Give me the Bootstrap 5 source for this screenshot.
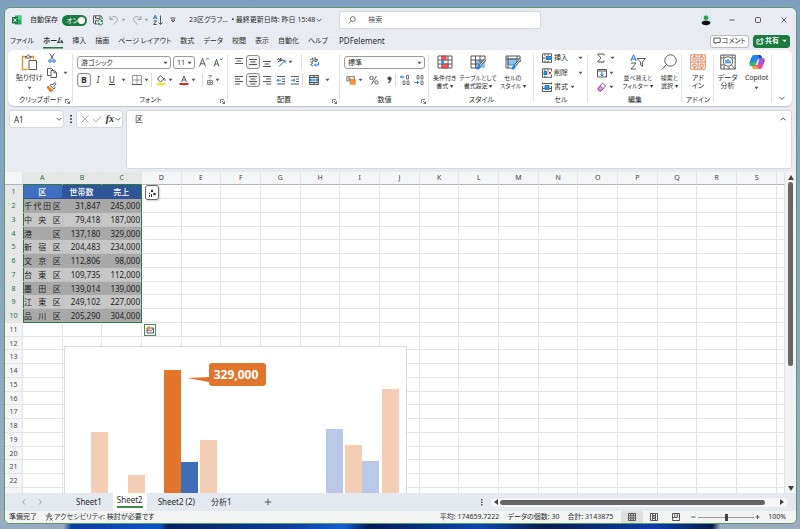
<!DOCTYPE html>
<html lang="ja">
<head>
<meta charset="utf-8">
<meta name="viewport" content="width=device-width, initial-scale=1">
<title>23区グラフ - Excel</title>
<link href="https://cdn.jsdelivr.net/npm/bootstrap@5.3.0/dist/css/bootstrap.min.css" rel="stylesheet">
<style>
:root{--ink:#2b2b2b;--green:#1b7a3e;--line:#d4d7db}
body{height:100vh;padding:7px 3px 5px 4px;overflow:hidden;color:var(--ink);
 font-family:"Noto Sans","Noto Sans CJK JP",sans-serif;font-size:7px;line-height:8px;font-feature-settings:"palt";
 background:linear-gradient(100deg,#96abbd 0 8%,#0b3f9c 9%,#0c55c4 20%,#06225f 21%,#0a3f9a 36%,#1560cf 43%,#041c55 46%,#0b48ad 60%,#0a1d4d 68%,#0b3fa8 82%,#071c4a 89%,#9aadbf 90%) bottom/100% 6px no-repeat,
 linear-gradient(#7f9fbf,#86a5bf 40%,#9aadbf)}
button,input,select,textarea{font:inherit;color:inherit;border:0;background:none;padding:0;margin:0}
button{display:inline-flex;align-items:center;justify-content:center;white-space:nowrap}
svg{display:block;flex:none;overflow:visible;fill:none;stroke:#575757;stroke-width:1}
a{color:inherit;text-decoration:none}
.gap-s{margin-left:2px}.gap-r{margin-right:1px}.gap-m{margin-left:6px}
.win{height:100%;border:1px solid #5d9967;border-radius:6px;background:#e8ecf2;overflow:hidden}
.titlebar{height:24px;padding:0 4px 0 7px}
.i5{width:5px;height:4px}.i8{width:8px;height:8px}.i10{width:10px;height:10px}.i12{width:12px;height:12px}.i16{width:16px;height:16px}
.autosave{width:25px;height:11px;border-radius:6px;background:var(--green);color:#fff;position:relative;padding-left:4px;line-height:11px;cursor:pointer}
.autosave input{appearance:none;position:absolute;right:2px;top:2px;width:7px;height:7px;border-radius:50%;background:#fff}
.finder{height:18px;border:1px solid #d3d6da;border-radius:3px;background:#fff;padding-left:8px;color:#555;flex:0 0 202px}
.finder input{outline:0}
.finder input::placeholder{color:#555;opacity:1}
.menubar{height:18px;padding:0 6px 0 5px}
.menubar a{line-height:14px;white-space:nowrap;margin-right:9px}
.menubar .current{font-weight:700;border-bottom:1px solid var(--green);box-shadow:0 1px #7aae88;line-height:12px}
.latin{font-size:8px}
.pill{height:13px;border:1px solid #bbb;border-radius:3px;background:#fff;padding:0 2px;gap:1px}
.pill.share{background:var(--green);border-color:var(--green);color:#fff}
.ribbon{height:56px;margin:0 4px 0 3px;background:#fff;border-radius:6px;box-shadow:0 1px 1px #bfc4ca;display:grid;
 grid-template-columns:65px 155px 112px 89px 105px 54px 94px 32px 58px 1fr}
.panel{position:relative;display:flex;flex-direction:column;min-width:0;padding-top:3px}
.panel:not(:last-child)::after{content:"";position:absolute;right:0;top:4px;bottom:4px;width:1px;background:#e2e2e2}
.panel .tools{height:43px}
.caption-row{height:9px;text-align:center;position:relative}
.caption-row button{position:absolute;right:3px;top:3px}
.big{flex-direction:column;justify-content:flex-start;white-space:nowrap}
.big span{line-height:8px;text-align:center}
.big .i16{margin:1px 0 4px}
.tight .big span{font-size:6px}
.trow{height:18px;display:flex;align-items:center}
.combo{appearance:none;height:13px;border:1px solid #9a9a9a;border-radius:3px;padding:0 3px;background:#fff;line-height:11px}
.combo-wrap{position:relative}
.combo-wrap svg{position:absolute;right:3px;top:5px;pointer-events:none}
.font-name{width:94px}.font-size{width:22px}.num-format{width:81px}
.on{width:14px;height:14px;border:1px solid #8d8d8d;border-radius:3px;background:#f2f2f2}
.rule{width:1px;height:14px;background:#ddd}
.slot{width:14px}
.formula{height:66px;padding:4px 4px 3px 4px;gap:3px}
.fbox{background:#fff;border:1px solid var(--line);border-radius:3px}
.fbox.short{height:18px}
.namebox{width:55px}.fxbox{width:47px}
.formula textarea{resize:none}
.fnx{font-family:"Liberation Serif",serif;font-weight:700;font-size:10px}
.sheet-area{position:relative;overflow:hidden;background:#fff;min-height:0}
.cells{width:100%;table-layout:fixed;border-collapse:separate;border-spacing:0;font-size:8px;line-height:12px}
.cells th,.cells td{padding:0;height:14px;font-weight:400;white-space:nowrap;border-right:1px solid #e3e3e3;border-bottom:1px solid #e3e3e3}
.cells tr:nth-child(4n) > *{height:13px;line-height:11px}
.cells th{background:#f4f5f6;text-align:center;font-size:7px;color:#444}
.cells thead th{height:13px;line-height:10px;border-bottom-color:#b5b5b5}
.cells .picked{background:#e5e7e7;color:#26713c}
.cells thead .picked{border-bottom-color:#2f7a44}
.cells .sel{text-align:right;padding-right:1px;background:#c7c7c7;border-color:#c0c0c0;color:#222}
.cells tr:nth-child(even) .sel{background:#a8a8a8;border-color:#aaa}
.cells .sel.ward{text-align:left;text-align-last:justify;padding:0 1px;font-feature-settings:normal}
.cells tr:first-child .sel{background:#2f5597;border-color:#2f5597;color:#fff;text-align:center;text-align-last:center;font-weight:500}
.cells tr:first-child .sel.ward{background:#3f6fc2}
.cells .sel.ward{box-shadow:inset 1px 0 #2f7a44}
.cells .sel.edge{border-right-color:#2f7a44!important}
.cells tr:nth-child(10) .sel{border-bottom-color:#2f7a44}
.spot{position:relative}
.spot button{position:absolute;background:#fff;z-index:2}
.spark{left:3px;top:0;width:14px;height:15px;border:1px solid #666!important;border-radius:3px;box-shadow:1px 1px 2px #ccc}
.quick{left:2px;top:1px;width:12px;height:12px;border:1px solid #56855d!important}
.c-head{width:18px}.c-last{width:8px}
.plot{position:absolute;left:59px;top:174px;z-index:1}
.vscroll{flex:0 0 11px;background:#f1f2f4;padding:3px 0 1px}
.vscroll i{width:5px;border-radius:3px;background:#666;height:184px;margin-top:2px}
.tabs{height:18px;padding-left:15px;background:#e4e8ef}
.tabs a{line-height:18px;font-size:8px;padding:0 8px;height:18px;white-space:nowrap}
.tabs .current{background:#fff;border-radius:0 0 4px 4px;padding:0 4px;margin:0 3px}
.tabs .current span{display:block;line-height:13px;border-bottom:2px solid #3c8a4c}
.hscroll{width:297px;height:9px;border-radius:5px;background:#f7f7f8;padding:0 4px 0 3px;gap:2px}
.hscroll i{height:5px;border-radius:3px;background:#666;flex:0 0 265px}
.status{height:12px;background:#f2f4f3;padding:0 10px 0 4px;white-space:nowrap}
.status .viewbtn{width:22px;height:12px}
.status .viewbtn.active{background:#dedede}
.zoomer{appearance:none;width:56px;height:8px;background:linear-gradient(#999,#999) center/100% 1px no-repeat}
.zoomer::-webkit-slider-thumb{appearance:none;width:3px;height:7px;background:#444}
</style>
<script src="https://cdn.jsdelivr.net/npm/bootstrap@5.3.0/dist/js/bootstrap.bundle.min.js"></script>
</head>
<body>
<svg class="d-none" aria-hidden="true">
 <symbol id="caret" viewBox="0 0 5 4"><path d="M.5.8h4L2.5 3.2z" fill="#555" stroke="none"/></symbol>
 <symbol id="chev" viewBox="0 0 8 8"><path d="M1.5 2.8 4 5.3l2.500-2.500"/></symbol>
 <symbol id="launch" viewBox="0 0 5 5"><path d="M.5 4V.5H4M2 2l2.500 2.500M4.600 2.200v2.400H2.200" stroke-width=".8"/></symbol>
 <symbol id="al" viewBox="0 0 10 10"><path d="M1 1.500h8M1 4h5M1 6.500h8M1 9h5"/></symbol>
 <symbol id="ac" viewBox="0 0 10 10"><path d="M1 1.500h8M2.500 4h5M1 6.500h8M2.500 9h5"/></symbol>
 <symbol id="ar" viewBox="0 0 10 10"><path d="M1 1.500h8M4 4h5M1 6.500h8M4 9h5"/></symbol>
 <symbol id="at" viewBox="0 0 10 10"><path d="M1 1.500h8M2.500 4h5M1 6.500h8"/></symbol>
 <symbol id="am" viewBox="0 0 10 10"><path d="M1 2.500h8M2.500 5h5M1 7.500h8"/></symbol>
 <symbol id="ab" viewBox="0 0 10 10"><path d="M1 4.500h8M2.500 7h5M1 9.500h8"/></symbol>
 <symbol id="lens" viewBox="0 0 10 10"><circle cx="6" cy="3.800" r="3"/><path d="M3.800 6 .8 9.200"/></symbol>
</svg>

<div class="win d-flex flex-column">
 <header class="titlebar d-flex align-items-center flex-shrink-0">
  <svg class="i10" viewBox="0 0 10 10"><path d="M3 .5h6.500v9H3z" fill="#23a566" stroke="none"/><path d="M6 .5h3.500v4.500H6z" fill="#53ce8a" stroke="none"/><path d="M0 2h6v6.500H0z" fill="#107c41" stroke="none"/><path d="m1.500 3.500 3 3.500M4.500 3.500l-3 3.500" stroke="#fff"/></svg>
  <span class="text-nowrap ms-2">自動保存</span>
  <label class="autosave ms-1">オン<input type="checkbox" role="switch" checked aria-label="自動保存"></label>
  <button class="gap-m" aria-label="保存"><svg class="i10" viewBox="0 0 10 10"><path d="M4 9H1.500L.5 8V.8h7.300L9.200 2v2M2.500 1v2.500h4.500V1M2.500 9V5.500h2"/><path d="M5 7a2 2 0 0 1 4-.8M9.500 7.500a2 2 0 0 1-4 1M9.200 4.700v1.700H7.500M5.200 10V8.300H7" stroke="#1f8a4c"/></svg></button>
  <button class="gap-m" aria-label="元に戻す"><svg class="i10" viewBox="0 0 10 10" style="stroke:#9aa0a6"><path d="M1 1v3.500h3.500M1.200 4.300C3 1.500 6 .8 7.700 2.500 9.400 4.300 8.500 6 4.500 9.500"/></svg><svg class="i5 gap-s"><use href="#caret" opacity=".5"/></svg></button>
  <button class="gap-m" aria-label="やり直し"><svg class="i10" viewBox="0 0 10 10" style="stroke:#9aa0a6"><path d="M9 1v3.500H5.500M8.800 4.300C7 1.500 4 .8 2.300 2.500.6 4.300 1.500 6 5.500 9.500"/></svg><svg class="i5 gap-s"><use href="#caret" opacity=".5"/></svg></button>
  <button class="ms-1" aria-label="昇順"><svg class="i10" viewBox="0 0 10 10"><path d="M.5 4 2.200.2 4 4M1 3h2.500" stroke="#1976d2"/><path d="M.6 5.800h3L.6 9.500h3.200M7.500.5v9M5.500 7.500l2 2 2-2"/></svg></button>
  <button class="gap-m" aria-label="ツールバーのカスタマイズ"><svg class="i8" viewBox="0 0 8 8"><path d="M1.500 2h5M2 4h4L4 6z"/></svg></button>
  <button class="ms-2 ps-1 text-nowrap">23区グラフ…&nbsp; • 最終更新日時: 昨日 15:48<svg class="i8"><use href="#chev"/></svg></button>
  <label class="finder d-flex align-items-center ms-3" aria-label="検索"><svg class="i8 me-2"><use href="#lens" width="8" height="8"/></svg><input class="ms-1 w-75" type="search" placeholder="検索"></label>
  <div class="ms-auto d-flex align-items-center gap-3">
   <svg class="i12" viewBox="0 0 12 12" style="stroke:none"><circle cx="6" cy="6" r="6" fill="#d7e6ee"/><circle cx="6" cy="3.800" r="2.300" fill="#269b51"/><path d="M1.500 9c0-3.500 9-3.500 9 0-2 3-7 3-9 0z" fill="#111"/></svg>
   <button aria-label="最小化"><svg class="i8" viewBox="0 0 8 8"><path d="M1.500 4h5"/></svg></button>
   <button class="gap-s" aria-label="最大化"><svg class="i8" viewBox="0 0 8 8"><rect x="1.500" y="1.500" width="5" height="5" rx="1"/></svg></button>
   <button class="gap-s me-1" aria-label="閉じる"><svg class="i8" viewBox="0 0 8 8"><path d="m1.500 1.500 5 5m0-5-5 5"/></svg></button>
  </div>
 </header>

 <nav class="menubar d-flex align-items-center flex-shrink-0">
  <a href="#">ファイル</a><a href="#" class="current">ホーム</a><a href="#">挿入</a><a href="#">描画</a><a href="#">ページ レイアウト</a><a href="#">数式</a><a href="#">データ</a><a href="#">校閲</a><a href="#">表示</a><a href="#">自動化</a><a href="#">ヘルプ</a><a href="#" class="latin gap-s">PDFelement</a>
  <button class="pill ms-auto"><svg class="i8" viewBox="0 0 8 8"><path d="M.8 1h6.400v4.500H4L2.200 7V5.500H.8z"/></svg>コメント</button>
  <button class="pill share ms-1"><svg class="i8" viewBox="0 0 8 8" style="stroke:#fff"><path d="M3 2.500H1V7h5.500V5M2.500 5C3 3 4 2.500 5.500 2.500V1L7.500 3 5.500 4.800V3.500"/></svg><b>共有</b><svg class="i5 gap-s" viewBox="0 0 5 4"><path d="M.5.8h4L2.500 3.200z" style="fill:#fff;stroke:none"/></svg></button>
 </nav>

 <section class="ribbon flex-shrink-0">
  <div class="panel">
   <div class="tools d-flex ps-2">
    <button class="big me-1"><svg class="i16" viewBox="0 0 16 16"><path d="M5 2.500H1.500v13H7M10 2.500h2.500v3" stroke="#e39a3f" stroke-width="1.500"/><path d="M4.500 4V2.500H6C6 .3 8.500.3 8.500 2.500H10V4zM8 6.500h7.500v9H8z" fill="#fff"/></svg><span>貼り付け</span><svg class="i5 mt-1"><use href="#caret"/></svg></button>
    <div class="d-flex flex-column justify-content-between pb-1">
     <button class="align-self-start" aria-label="切り取り"><svg class="i10" viewBox="0 0 10 10"><path d="m2.800.5 3.500 6M7.200.5l-3.500 6"/><circle cx="3" cy="8" r="1.300" stroke="#1976d2"/><circle cx="7" cy="8" r="1.300" stroke="#1976d2"/></svg></button>
     <button aria-label="コピー"><svg class="i10" viewBox="0 0 10 10"><path d="M3.500 7.500h-3v-7h4L6 2M4 2.500h3.500l2 2v5H4zM7 2.800v2h2"/></svg><svg class="i5 gap-m"><use href="#caret"/></svg></button>
     <button class="align-self-start" aria-label="書式のコピー"><svg class="i10" viewBox="0 0 10 10"><path d="m1 4 5 4.500L3.500 9.700.5 6z" fill="#f08a24" stroke="#d97313"/><path d="m3 3.500 4 3.500 1-1.500-1-1 2-3L7.500.8 5.500 3 4.500 2z" fill="#fff"/></svg></button>
    </div>
   </div>
   <div class="caption-row">クリップボード<button aria-label="クリップボードの設定"><svg width="5" height="5"><use href="#launch"/></svg></button></div>
  </div>

  <div class="panel">
   <div class="tools ps-1">
    <div class="trow">
     <span class="combo-wrap"><select class="combo font-name" aria-label="フォント"><option>游ゴシック</option></select><svg class="i5"><use href="#caret"/></svg></span>
     <span class="combo-wrap gap-s"><select class="combo font-size" aria-label="サイズ"><option>11</option></select><svg class="i5"><use href="#caret"/></svg></span>
     <button class="ms-1" aria-label="拡大"><svg class="i10" viewBox="0 0 10 10"><path d="m.5 9.500 3-8 3 8M1.500 6.800h4"/><path d="M7.500 2.500 8.700 1l1.300 1.500" stroke="#1976d2"/></svg></button>
     <button class="ms-1" aria-label="縮小"><svg class="i10" viewBox="0 0 10 10"><path d="m1 9.500 2.500-7 2.500 7M2 7h3.200"/><path d="M7 1.500 8.200 3l1.300-1.500" stroke="#1976d2"/></svg></button>
    </div>
    <div class="trow">
     <button class="on latin fw-bold">B</button>
     <button class="slot latin fst-italic">I</button>
     <button class="slot latin text-decoration-underline">U</button>
     <svg class="i5 gap-s"><use href="#caret"/></svg>
     <button class="gap-m" aria-label="罫線"><svg class="i10" viewBox="0 0 10 10"><path d="M.5.5h9v9h-9zM5 .5v9M.5 5h9" stroke="#999"/><path d="M0 9.500h10"/></svg></button>
     <svg class="i5 gap-s"><use href="#caret"/></svg><i class="rule gap-s"></i>
     <button class="ms-1" aria-label="塗りつぶし"><svg class="i10" viewBox="0 0 10 10"><path d="m4.500.5 3.500 3.500-3.500 3-3-3z"/><path d="M8 3q1.500 1.500 1 3" stroke="#1976d2"/><path d="M.5 9h9" stroke="#f2e51c" stroke-width="2"/></svg></button>
     <svg class="i5 gap-s"><use href="#caret"/></svg>
     <button class="gap-m" aria-label="文字色"><svg class="i10" viewBox="0 0 10 10"><path d="m2.500 7 2.500-6 2.500 6M3.500 5h3"/><path d="M.5 9h9" stroke="#e1241b" stroke-width="2"/></svg></button>
     <svg class="i5 gap-s"><use href="#caret"/></svg><i class="rule gap-m"></i>
     <button class="gap-s" aria-label="ふりがな"><svg class="i10" viewBox="0 0 10 10" style="stroke:#888"><path d="M3.500.5h3l-2 3M2.500 5.500h5v4h-5zM5 4.500v5M2.500 7.500h5"/></svg></button>
     <svg class="i5"><use href="#caret"/></svg>
    </div>
   </div>
   <div class="caption-row">フォント<button aria-label="フォントの設定"><svg width="5" height="5"><use href="#launch"/></svg></button></div>
  </div>

  <div class="panel">
   <div class="tools ps-1">
    <div class="trow">
     <button class="slot" aria-label="上揃え"><svg class="i10"><use href="#at"/></svg></button>
     <button class="on" aria-label="上下中央"><svg class="i10"><use href="#am"/></svg></button>
     <button class="slot" aria-label="下揃え"><svg class="i10"><use href="#ab"/></svg></button>
     <button class="slot" aria-label="方向"><svg class="i10" viewBox="0 0 10 10"><path d="m1 3 2-1.500 1 3M1.500 5l2-1M4.500 1v3l2-1z"/><path d="m3 9.500 6-6M6.500 3.500H9V6" stroke="#1976d2"/></svg></button>
     <svg class="i5"><use href="#caret"/></svg><i class="rule ms-2 gap-r"></i>
     <button class="gap-m" aria-label="折り返し"><svg class="i10" viewBox="0 0 10 10"><path d="m1 3 3-2v4H1.500M6 0v5l3-2-3-1M4 6l-2.500 1.500L4 9"/><path d="M9.500 5v3h-4M7 6.500 5.500 8 7 9.500" stroke="#1976d2"/></svg></button>
    </div>
    <div class="trow">
     <button class="slot" aria-label="左揃え"><svg class="i10"><use href="#al"/></svg></button>
     <button class="on" aria-label="中央揃え"><svg class="i10"><use href="#ac"/></svg></button>
     <button class="slot" aria-label="右揃え"><svg class="i10"><use href="#ar"/></svg></button>
     <button class="slot" aria-label="インデントを減らす"><svg class="i10" viewBox="0 0 10 10"><path d="M1 1.500h8M6 4h3M6 6.500h3M1 9h8"/><path d="M5 5.200H1m1.500-1.500L1 5.200l1.500 1.500" stroke="#1976d2"/></svg></button>
     <button class="slot" aria-label="インデントを増やす"><svg class="i10" viewBox="0 0 10 10"><path d="M1 1.500h8M6 4h3M6 6.500h3M1 9h8"/><path d="M1 5.200h4M3.500 3.700 5 5.200 3.500 6.700" stroke="#1976d2"/></svg></button>
     <i class="rule"></i>
     <button class="gap-m" aria-label="結合"><svg class="i10" viewBox="0 0 10 10"><path d="M.5.5h9v9h-9z" fill="#cfe5f7"/><path d="M5 .5v2M5 7.500v2M.5 2.500h9M.5 7.500h9"/><path d="M1 5h8M2.500 3.800 1 5l1.500 1.200M7.500 3.800 9 5 7.500 6.200" stroke="#1976d2"/></svg></button>
     <svg class="i5 gap-m"><use href="#caret"/></svg>
    </div>
   </div>
   <div class="caption-row">配置<button aria-label="配置の設定"><svg width="5" height="5"><use href="#launch"/></svg></button></div>
  </div>

  <div class="panel">
   <div class="tools ps-1">
    <div class="trow"><span class="combo-wrap"><select class="combo num-format" aria-label="表示形式"><option>標準</option></select><svg class="i5"><use href="#caret"/></svg></span></div>
    <div class="trow">
     <button class="gap-s" aria-label="通貨"><svg class="i10" viewBox="0 0 12 10"><path d="M1 1h9v5H1z"/><path d="M5 4.500h6V10H5z" fill="#f39a3c" stroke="#e27d16"/><circle cx="4" cy="3.500" r="1"/></svg></button>
     <svg class="i5 gap-s"><use href="#caret"/></svg>
     <button class="gap-m" aria-label="パーセント"><svg class="i10" viewBox="0 0 10 10"><circle cx="2.500" cy="3" r="1.700"/><circle cx="7.500" cy="7.500" r="1.700"/><path d="m7.500 1-5 8.500"/></svg></button>
     <button class="gap-m" aria-label="桁区切り"><svg class="i8" viewBox="0 0 8 8"><circle cx="4.500" cy="2.500" r="1.600" style="fill:#333"/><path d="M5.800 2.500Q6 5.500 3 7" stroke-width="1.300"/></svg></button>
     <i class="rule gap-s me-1"></i>
     <button aria-label="小数点以下を増やす"><svg class="i10" viewBox="0 0 10 10"><path d="M4.500 2H.5M2 .5.5 2 2 3.500" stroke="#1976d2"/><path d="M6.500.5h2v3.500h-2zM3 6h2v3.500H3zM7 6h2v3.500H7z" stroke-width=".8"/></svg></button>
     <button class="ms-1" aria-label="小数点以下を減らす"><svg class="i10" viewBox="0 0 10 10"><path d="M.5 7.500h4M3 6l1.500 1.500L3 9" stroke="#1976d2"/><path d="M7 6h2v3.500H7zM3 .5h2V4H3zM7 .5h2V4H7z" stroke-width=".8"/></svg></button>
    </div>
   </div>
   <div class="caption-row">数値<button aria-label="数値の設定"><svg width="5" height="5"><use href="#launch"/></svg></button></div>
  </div>

  <div class="panel">
   <div class="tools tight d-flex justify-content-between ps-1 pe-2">
    <button class="big"><svg class="i16" viewBox="0 0 16 16"><path d="M1 2h14v12H1zM1 6h14M1 10h14M5 2v12M11 2v12"/><path d="M5 2h4v4H5zM5 10h6v4H5z" fill="#f0595c" stroke="#d63b40"/><path d="M4 6h3v4H4z" fill="#3f8fd8" stroke="none"/></svg><span>条件付き<br>書式 ▾</span></button>
    <button class="big"><svg class="i16" viewBox="0 0 16 16"><path d="M6 6h9v8H6z" fill="#8cc4ef" stroke="none"/><path d="M15 8V2H1v12h6M1 6h14M1 10h8M5.500 2v12M10 2v7"/><path d="m15.500 5-6 7" stroke="#555" stroke-width="2.500"/><path d="m15.500 5-6 7" stroke="#fff"/><path d="M9.500 11c-2 0-2 3-4 4 3 1 5.500 0 5-3z" fill="#2283d8" stroke="none"/></svg><span>テーブルとして<br>書式設定 ▾</span></button>
    <button class="big"><svg class="i16" viewBox="0 0 16 16"><path d="M3 5h9v6H3z" fill="#8cc4ef" stroke="#3b8ad0"/><path d="M15 8V2H1v12h5M1 5h14M3 2v12M12 2v3"/><path d="m15.500 5-6 7" stroke="#555" stroke-width="2.500"/><path d="m15.500 5-6 7" stroke="#fff"/><path d="M9.500 11c-2 0-2 3-4 4 3 1 5.500 0 5-3z" fill="#2283d8" stroke="none"/></svg><span>セルの<br>スタイル ▾</span></button>
   </div>
   <div class="caption-row">スタイル</div>
  </div>

  <div class="panel">
   <div class="tools d-flex flex-column justify-content-between align-items-start ps-2 pb-1">
    <button><svg class="i10" viewBox="0 0 10 10"><path d="M3 .8H.5v8.500H3M3 .8h6.500v2.500M3 9.300h6.500V7M3 .8v2M6 .8v2M3 7.500v2M6 7.500v2"/><path d="M4 3.500h5.500v3H4z" fill="#3c91db" stroke="#2476bf"/><path d="M0 5h3"/></svg><span class="gap-s me-1">挿入</span><svg class="i5 gap-m"><use href="#caret"/></svg></button>
    <button><svg class="i10" viewBox="0 0 10 10"><path d="M3 .8H.5v8.500h9V7M3 .8h6.500v2M3 .8v2M6 .8v2M3 7.500v2"/><path d="M2 3.500h3v3H2z" fill="#3c91db" stroke="#2476bf"/><path d="m6.500 3.500 3 3m0-3-3 3" stroke="#e0322f"/></svg><span class="gap-s me-1">削除</span><svg class="i5 gap-m"><use href="#caret"/></svg></button>
    <button><svg class="i10" viewBox="0 0 10 10"><path d="M.5 1.500h9M.5.5v2M9.500.5v2M.5 4v5.500h9V4M.5 6.500h9"/><path d="M3 3.500h4v4H3z" fill="#3c91db" stroke="#2476bf"/></svg><span class="gap-s">書式</span><svg class="i5 gap-s"><use href="#caret"/></svg></button>
   </div>
   <div class="caption-row">セル</div>
  </div>

  <div class="panel">
   <div class="tools tight d-flex ps-2">
    <div class="d-flex flex-column justify-content-between pb-1">
     <button aria-label="合計"><svg class="i10" viewBox="0 0 10 10"><path d="M8 2.500V1H1.500L5 5 1.500 9H8V7.500"/></svg><svg class="i5 ms-1"><use href="#caret"/></svg></button>
     <button aria-label="フィル"><svg class="i10" viewBox="0 0 10 10"><path d="M.5 1.500h9v7.500h-9zM.5 3h9"/><path d="M5 4v4M3.500 6.500 5 8l1.500-1.500" stroke="#1976d2"/></svg><svg class="i5 gap-s"><use href="#caret"/></svg></button>
     <button aria-label="クリア"><svg class="i10" viewBox="0 0 10 10" style="stroke:#a340b5"><path d="m5.500 1 3 3-4.500 5H2.500L.8 6.800z"/><path d="m.8 6.800 2.500-3 3 3L4 9H2.500z" fill="#d69ae0"/></svg><svg class="i5 gap-s"><use href="#caret"/></svg></button>
    </div>
    <button class="big flex-fill"><svg class="i16" viewBox="0 0 16 16"><path d="M.8 7 3.500.8 6.200 7M1.800 5h3.500" stroke="#1976d2"/><path d="M1 9h5l-5 6h5.200M7 4.500h8.500L12.500 8v4.500l-2-1.500V8z"/></svg><span>並べ替えと<br>フィルター ▾</span></button>
    <button class="big pe-1"><svg class="i16" viewBox="0 0 16 16"><circle cx="9.500" cy="6.500" r="5.700"/><path d="M5.500 10.500.8 15.500"/></svg><span>検索と<br>選択 ▾</span></button>
   </div>
   <div class="caption-row">編集</div>
  </div>

  <div class="panel">
   <div class="tools d-flex justify-content-center"><button class="big"><svg class="i16" viewBox="0 0 16 16" style="stroke:#dc8052"><path d="M.8.8h14.400v14.400H.8zM8 .8v14.400M.8 8h14.400"/><path d="M3 3h3v3H3zM10 3h3v3h-3zM3 10h3v3H3zM10 10h3v3h-3zM4.500 3V1M11.500 3V1M4.500 13v2M11.500 13v2"/></svg><span>アド<br>イン</span></button></div>
   <div class="caption-row">アドイン</div>
  </div>

  <div class="panel">
   <div class="tools d-flex justify-content-around">
    <button class="big"><svg class="i16" viewBox="0 0 16 16"><path d="M.8 1h14.400v14H.8zM.8 4h3M12 4h3M.8 11h4M4 1v3M12 1v3M4 12v3M9 13v2"/><circle cx="8" cy="7.500" r="4.700" fill="#fff"/><path d="m11.500 11 3.500 4"/><path d="M6 6v3.500M8 5v4.500M10 6.500v3" stroke="#1976d2" stroke-width="1.300"/></svg><span>データ<br>分析</span></button>
    <button class="big"><svg class="i16" viewBox="0 0 16 16" style="stroke:none"><path d="M5 1h5.500q1.500 0 2 1.500L13 4h-2Q9.500 4 9 5.500L7 12H2.500Q0 12 .5 8.500L2.500 3Q3.200 1 5 1z" fill="#2087e8"/><path d="M.8 8 2 12h4.500L8 8z" fill="#35b96b"/><path d="M9 1h1.500q1.500 0 2 1.500L13 4h-2.500Z" fill="#1747b5"/><path d="M11 15H5.500Q4 15 3.500 13.500L3 12h2q1.500 0 2-1.500L9 4h4.500q2.500 0 2 3.500L13.500 13q-.7 2-2.500 2z" fill="#e8518d"/><path d="M9 4h4.500q2.500 0 2 3.500l-.8 2.500H7z" fill="#9a5be0"/><path d="M3 12h4l3 3H5.500Q4 15 3.500 13.500z" fill="#f5a530"/><path d="m8.800 5.500 1.500 0-2 5.500H6.800z" fill="#fff"/></svg><span>Copilot</span><svg class="i5 mt-1"><use href="#caret"/></svg></button>
   </div>
  </div>
  <div class="panel justify-content-end align-items-center pb-1"><button aria-label="リボンを折りたたむ"><svg class="i8"><use href="#chev"/></svg></button></div>
 </section>

 <section class="formula d-flex flex-shrink-0">
  <label class="fbox short namebox d-flex align-items-center gap-1 ps-1" aria-label="名前ボックス"><input class="latin flex-fill w-50" value="A1"><svg class="i8"><use href="#chev"/></svg></label>
  <svg class="mt-1 gap-s" width="4" height="10" viewBox="1 0 4 10" style="stroke:none;fill:#444"><path d="M2 1h2v1.500H2zM2 4.300h2v1.500H2zM2 7.500h2V9H2z"/></svg>
  <div class="fbox short fxbox d-flex align-items-center justify-content-between ps-1">
   <button aria-label="取消"><svg class="i8" viewBox="0 0 8 8" style="stroke:#aaa"><path d="m.5.5 7 7m0-7-7 7"/></svg></button>
   <button aria-label="入力"><svg class="i10" viewBox="0 0 10 10" style="stroke:#aaa"><path d="m1 5 3 3 5.500-6"/></svg></button>
   <button aria-label="関数の挿入"><em class="fnx">fx</em><svg class="i8"><use href="#chev"/></svg></button>
  </div>
  <div class="fbox flex-fill d-flex">
   <textarea class="flex-fill pt-1 ps-2 latin" aria-label="数式バー">区</textarea>
   <button class="align-self-start p-1" aria-label="数式バーを折りたたむ"><svg class="i8" viewBox="0 0 8 8"><path d="M1.500 5.300 4 2.800l2.500 2.500"/></svg></button>
  </div>
 </section>

 <main class="d-flex flex-fill overflow-hidden">
  <div class="sheet-area flex-fill">
   <table class="cells" id="cells"></table>
   <svg class="plot" width="344" height="170" viewBox="0 0 344 170" style="stroke:none" role="img" aria-label="売上と世帯数のグラフ">
    <path d="M.5.500h342v200H.5z" fill="#fff" stroke="#d9d9d9"/>
    <g fill="#f4ceb4"><path d="M27 86h17v90H27zM64 129h17v50H64zM136 94h17v90h-17zM281 99h17v80h-17zM318 43h17v140h-17z"/></g>
    <path d="M100 24h17v150h-17z" fill="#e2752c"/><path d="M117 116h17v60h-17z" fill="#3f6db6"/>
    <path d="M262 83h17v90h-17zM298 115h17v60h-17z" fill="#b9c8e6"/>
    <path d="M148 17h51q3 0 3 3v17q0 3-3 3h-51q-3 0-3-3v-1l-22-4 22-1V20q0-3 3-3z" fill="#e2752c"/>
    <text x="172" y="33" text-anchor="middle" fill="#fff" font-size="12" font-weight="700" font-family="Noto Sans">329,000</text>
   </svg>
  </div>
  <div class="vscroll d-flex flex-column align-items-center">
   <svg width="6" height="5"><path d="M0 5h6L3 0z" style="fill:#444;stroke:none"/></svg><i></i>
   <svg class="mt-auto" width="6" height="6"><path d="M0 0h6L3 5z" style="fill:#444;stroke:none"/></svg>
  </div>
 </main>

 <nav class="tabs d-flex align-items-center flex-shrink-0">
  <button aria-label="前のシート"><svg class="i8" viewBox="0 0 8 8" style="stroke:#999"><path d="M5 1.500 2.500 4 5 6.500"/></svg></button>
  <button class="ms-2 me-4 gap-s" aria-label="次のシート"><svg class="i8" viewBox="0 0 8 8" style="stroke:#999"><path d="M3 1.500 5.500 4 3 6.500"/></svg></button>
  <a href="#">Sheet1</a><a href="#" class="current"><span>Sheet2</span></a><a href="#">Sheet2 (2)</a><a href="#">分析1</a>
  <button class="ms-4" aria-label="新しいシート"><svg class="i8" viewBox="0 0 8 8"><path d="M4 .8v6.400M.8 4h6.400"/></svg></button>
  <svg class="ms-auto me-2" width="3" height="8" style="stroke:none;fill:#555"><path d="M1 1h1.500v1.500H1zM1 3.500h1.500V5H1zM1 6h1.500v1.500H1z"/></svg>
  <div class="hscroll d-flex align-items-center me-2"><svg width="4" height="6"><path d="M4 0v6L0 3z" style="fill:#444;stroke:none"/></svg><i></i><svg class="ms-auto" width="4" height="6"><path d="M0 0v6l4-3z" style="fill:#444;stroke:none"/></svg></div>
 </nav>

 <footer class="status d-flex align-items-center flex-shrink-0">
  <span>準備完了</span>
  <svg class="i8 ms-2 gap-r" viewBox="0 0 8 8"><circle cx="4" cy="1.300" r=".9"/><path d="M.8 2.700 3 3.200v2L1.500 7.500M7.200 2.700 5 3.200v1M3 3.200h2M5 5l2.500 2.500M7.500 5 5 7.500"/></svg>
  <span>アクセシビリティ: 検討が必要です</span>
  <span class="ms-auto">平均: 174659.7222</span><span class="ms-2">データの個数: 30</span><span class="ms-2 me-2">合計: 3143875</span>
  <button class="viewbtn active" aria-label="標準"><svg class="i8" viewBox="0 0 8 8"><path d="M.5.500h7v7h-7zM.5 2.800h7M.5 5.200h7M2.800.5v7M5.200.5v7"/></svg></button>
  <button class="viewbtn" aria-label="ページ レイアウト"><svg class="i8" viewBox="0 0 8 8"><path d="M.5.500h7v7h-7zM2.500.5v7M5.500.5v7M2.500 2.500h3M2.500 4h3M2.500 5.500h3"/></svg></button>
  <button class="viewbtn" aria-label="改ページ プレビュー"><svg class="i8" viewBox="0 0 8 8"><path d="M.5.500h7v7h-7zM2.800.5v4h2.500v-4M.5 4.500h2"/></svg></button>
  <button class="ms-1" aria-label="縮小表示"><svg width="5" height="8"><path d="M.5 4h4"/></svg></button>
  <input class="zoomer gap-s gap-r" type="range" aria-label="ズーム">
  <button class="me-2" aria-label="拡大表示"><svg width="5" height="8"><path d="M.5 4h4M2.500 2v4"/></svg></button>
  <span>100%</span>
 </footer>
</div>
<script>
const data=[["区","世帯数","売上"],["千代田区","31,847","245,000"],["中央区","79,418","187,000"],["港区","137,180","329,000"],["新宿区","204,483","234,000"],["文京区","112,806","98,000"],["台東区","109,735","112,000"],["墨田区","139,014","139,000"],["江東区","249,102","227,000"],["品川区","205,290","304,000"]];
const letters=[..."ABCDEFGHIJKLMNOPQRS"];
const spark='<button class="spark" aria-label="分析"><svg class="i8" viewBox="0 0 8 8" style="stroke:none;fill:#333"><circle cx="4" cy="2" r="1.300"/><circle cx="6.500" cy="5" r="1.300"/><circle cx="1.500" cy="4.500" r=".7"/><path d="M1 6h1v2H1zM3 5h1v3H3z"/></svg></button>';
const quick='<button class="quick" aria-label="クイック分析"><svg class="i8" viewBox="0 0 8 8"><path d="M1 7V2h6.500v5zM1 5l2-1 1.500 1L7 3"/><path d="m2.500 0-2 3.500h1.500L1 6l3-3.500H2.500L4 0z" style="fill:#f08a24;stroke:none"/></svg></button>';
let html='<colgroup><col class="c-head">'+letters.map(()=>'<col>').join('')+'<col class="c-last"></colgroup><thead><tr><th></th>'+
 letters.map((c,i)=>`<th scope="col" class="${i<3?'picked':''}">${c}</th>`).join('')+'<th></th></tr></thead><tbody>';
for(let r=0;r<23;r++){
 html+=`<tr><th scope="row" class="${r<10?'picked':''}">${r<22?r+1:''}</th>`;
 for(let c=0;c<20;c++){
  if(r<10&&c<3) html+=`<td class="sel ${c==0?'ward':c==2?'edge':''}">${data[r][c]}</td>`;
  else if(c==3&&(r==0||r==10)) html+=`<td class="spot">${r?quick:spark}</td>`;
  else html+='<td></td>';
 }
 html+='</tr>';
}
document.getElementById('cells').innerHTML=html+'</tbody>';
</script>
</body>
</html>
